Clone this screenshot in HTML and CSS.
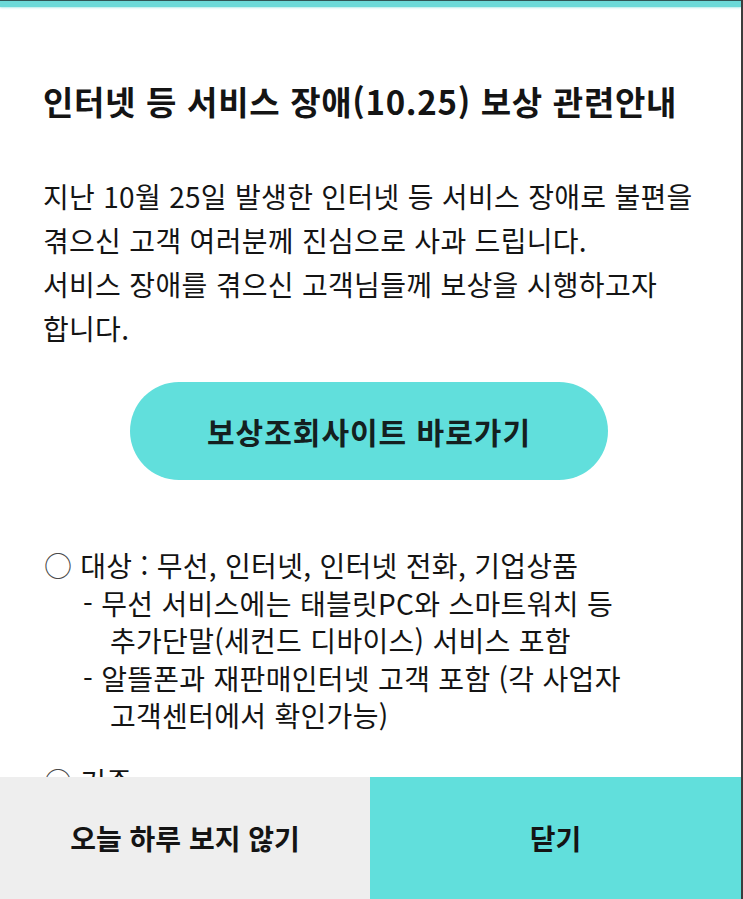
FILE: index.html
```html
<!DOCTYPE html>
<html lang="ko">
<head>
<meta charset="utf-8">
<title>보상 관련안내</title>
<link rel="stylesheet" href="styles.css">
</head>
<body>
<div class="dialog">
  <div class="accent"></div>
  <div class="content">
    <h1 class="title">인터넷 등 서비스 장애(10.25) 보상 관련안내</h1>
    <p class="intro">지난 10월 25일 발생한 인터넷 등 서비스 장애로 불편을<br>겪으신 고객 여러분께 진심으로 사과 드립니다.<br>서비스 장애를 겪으신 고객님들께 보상을 시행하고자<br>합니다.</p>
    <a class="cta" href="#">보상조회사이트 바로가기</a>
    <ul class="terms">
      <li class="term">
        <div class="term-head"><span class="mark">○</span> 대상 : 무선, 인터넷, 인터넷 전화, 기업상품</div>
        <div class="sub">- 무선 서비스에는 태블릿PC와 스마트워치 등<br>추가단말(세컨드 디바이스) 서비스 포함</div>
        <div class="sub">- 알뜰폰과 재판매인터넷 고객 포함 (각 사업자<br>고객센터에서 확인가능)</div>
      </li>
      <li class="term">
        <div class="term-head"><span class="mark">○</span> 기준</div>
      </li>
    </ul>
  </div>
  <div class="actions">
    <button class="action action-skip">오늘 하루 보지 않기</button>
    <button class="action action-close">닫기</button>
  </div>
</div>
</body>
</html>
```

FILE: styles.css
```css
html, body {
  margin: 0;
  padding: 0;
  background: #ffffff;
}

body {
  font-family: "Noto Sans CJK KR", "Noto Sans", sans-serif;
  color: #141414;
}

.dialog {
  height: 899px;
  display: flex;
  flex-direction: column;
  border-right: 2px solid #3c3c3c;
  box-sizing: border-box;
  overflow: hidden;
}

.accent {
  flex: none;
  height: 6px;
  border-top: 1px solid #2f5656;
  background: #6bd9d8;
  box-shadow: 0 1px 2px rgba(107, 217, 216, 0.5);
}

.content {
  flex: 1;
  min-height: 0;
  overflow: hidden;
  padding: 72px 43px 0 43px;
}

.title {
  margin: 0;
  font-size: 33px;
  line-height: 44px;
  font-weight: 700;
  letter-spacing: 0.7px;
  white-space: nowrap;
}

.intro {
  margin: 51px 0 0 0;
  font-size: 28px;
  line-height: 44px;
  font-weight: 400;
  letter-spacing: 0.3px;
  white-space: nowrap;
}

.cta {
  display: flex;
  align-items: center;
  justify-content: center;
  width: 478px;
  height: 98px;
  margin: 32px 0 0 87px;
  border-radius: 49px;
  background: #61dfdc;
  color: #142020;
  font-size: 30px;
  font-weight: 700;
  letter-spacing: 1px;
  text-decoration: none;
}

.terms {
  list-style: none;
  margin: 67px 0 0 0;
  padding: 0;
}

.term {
  margin: 0 0 28px 0;
  font-size: 28px;
  line-height: 37.5px;
  letter-spacing: 0.3px;
  white-space: nowrap;
}

.mark {
  color: #4a4a4a;
  margin-left: 1px;
  letter-spacing: 0;
}

.sub {
  padding-left: 67px;
  text-indent: -27px;
}

.actions {
  flex: none;
  height: 122px;
  display: grid;
  grid-template-columns: 370px 1fr;
}

.action {
  border: none;
  margin: 0;
  padding: 0;
  font-family: inherit;
  font-size: 28px;
  font-weight: 700;
  color: #141414;
}

.action-skip {
  background: #eeeeee;
}

.action-close {
  background: #61dfdc;
}
```
